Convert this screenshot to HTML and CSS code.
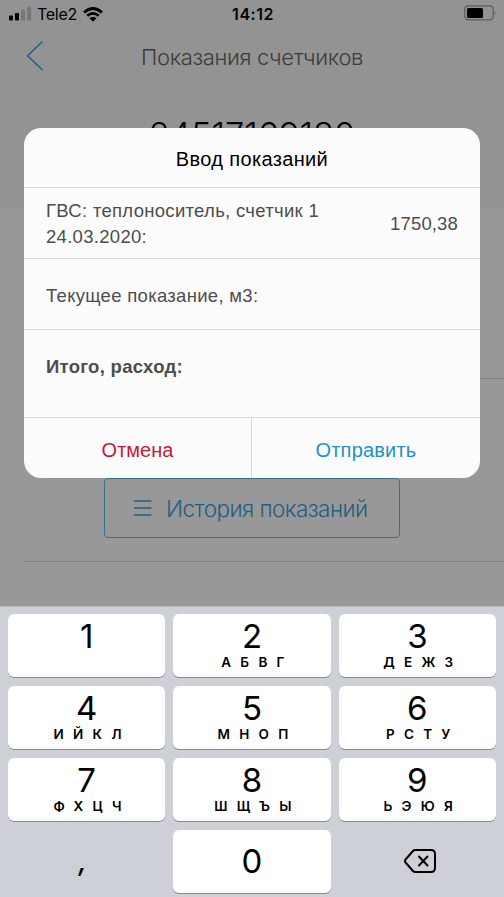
FILE: index.html
```html
<!DOCTYPE html>
<html lang="ru">
<head>
<meta charset="utf-8">
<title>Показания счетчиков</title>
<link rel="stylesheet" href="styles.css">
</head>
<body>
<div class="screen">
  <main class="page">
    <header class="top">
      <div class="status">
        <div class="carrier">
          <svg class="signal" width="23" height="15" viewBox="0 0 23 15"><rect x="0" y="9.500" width="4" height="5" rx="1"/><rect x="6" y="7" width="4" height="7.500" rx="1"/><g fill="#777"><rect x="12" y="3.500" width="4" height="11" rx="1"/><rect x="18.200" y=".5" width="4" height="14" rx="1"/></g></svg>
          <span class="operator">Tele2</span>
          <svg class="wifi" width="20" height="15" viewBox="0 0 20 15" fill="none" stroke="#000" stroke-width="2.700"><path d="M1 5.400Q10-2.400 19 5.400M4.200 8.700Q10 3.900 15.800 8.700"/><path fill="#000" stroke="none" d="M6.500 11.300Q10 8.700 13.500 11.300L10 14.800z"/></svg>
        </div>
        <span class="clock">14:12</span>
        <svg class="battery" width="33" height="16" viewBox="0 0 33 16"><rect x=".8" y=".8" width="28.400" height="14" rx="3.500" fill="none" stroke="#5d5d5d" stroke-width="1.300"/><rect x="3" y="3" width="16" height="10" rx="1.500"/><path d="M30.700 5.200q1.800 2.600 0 5.200z" fill="#5d5d5d"/></svg>
      </div>
      <nav class="nav">
        <svg class="back" width="18" height="32" viewBox="0 0 18 32"><path d="M16.500 1.500L1.500 15.700L16.500 30" fill="none" stroke="#235f80" stroke-width="1.400"/></svg>
        <h1 class="title">Показания счетчиков</h1>
      </nav>
      <div class="account">24517169180</div>
    </header>
    <section class="content">
      <div class="meter"></div>
      <div class="history">
        <svg width="18" height="16" viewBox="0 0 18 16"><path d="M0 1h17.500M0 8h17.500M0 15h17.500" stroke="#235f80" stroke-width="1.400"/></svg>
        <span class="history-text">История показаний</span>
      </div>
      <div class="rule"></div>
    </section>
  </main>

  <section class="dialog">
    <h2 class="dialog-title">Ввод показаний</h2>
    <div class="row previous"><p class="label"><span class="meter-name">ГВС: теплоноситель, счетчик 1</span><br><span class="date">24.03.2020:</span></p><span class="value">1750,38</span></div>
    <div class="row current"><span class="current-text">Текущее показание, м3:</span></div>
    <div class="row total"><b class="total-text">Итого, расход:</b></div>
    <div class="actions"><div class="cancel"><span class="cancel-text">Отмена</span></div><div class="send"><span class="send-text">Отправить</span></div></div>
  </section>

  <section class="keyboard">
    <div class="key"><span class="digit">1</span></div>
    <div class="key"><span class="digit">2</span><span class="letters">АБВГ</span></div>
    <div class="key"><span class="digit">3</span><span class="letters">ДЕЖЗ</span></div>
    <div class="key"><span class="digit">4</span><span class="letters">ИЙКЛ</span></div>
    <div class="key"><span class="digit">5</span><span class="letters">МНОП</span></div>
    <div class="key"><span class="digit">6</span><span class="letters">РСТУ</span></div>
    <div class="key"><span class="digit">7</span><span class="letters">ФХЦЧ</span></div>
    <div class="key"><span class="digit">8</span><span class="letters">ШЩЪЫ</span></div>
    <div class="key"><span class="digit">9</span><span class="letters">ЬЭЮЯ</span></div>
    <div class="key plain"><span class="comma">,</span></div>
    <div class="key zero"><span class="digit">0</span></div>
    <div class="key plain"><svg width="32" height="24" viewBox="0 0 32 24" fill="none" stroke="#000" stroke-width="2" stroke-linejoin="round" stroke-linecap="round"><path d="M11 1H27Q31 1 31 5V19Q31 23 27 23H11Q10 23 9 22L1.500 13.500Q.5 12 1.500 10.500L9 2Q10 1 11 1Z"/><path d="M15 7.500L23.500 16.500M23.500 7.500L15 16.500"/></svg></div>
  </section>
</div>
</body>
</html>
```
FILE: styles.css
```css
* { box-sizing: border-box; }
body { margin: 0; font-family: "Liberation Sans", sans-serif; }
h1, h2, p { margin: 0; font-weight: 400; }
svg { display: block; flex: none; }
span, b { white-space: nowrap; }
.screen { position: relative; width: 504px; height: 897px; overflow: hidden; background: #989898; display: flex; flex-direction: column; }
.page { height: 606px; flex: none; }
.top { height: 208px; background: #939393; overflow: hidden; }
.status { height: 28px; padding: 0 7px 0 9px; display: grid; grid-template-columns: 1fr auto 1fr; align-items: center; }
.carrier { display: flex; align-items: center; }
.signal { margin-top: -1px; }
.operator { margin-left: 5px; width: 41px; font: 400 16px/28px Inter, sans-serif; letter-spacing: -.3px; }
.wifi { margin-left: 5px; }
.clock { font: 600 16px/28px Inter, sans-serif; letter-spacing: .5px; }
.battery { justify-self: end; margin-top: -2px; }
.nav { height: 56px; padding-left: 26px; display: flex; align-items: center; }
.title { margin-left: 97px; white-space: nowrap; font: 300 22px/56px Inter, sans-serif; color: #3c3c3c; letter-spacing: -.35px; padding-top: 1px; }
.back { margin-top: -1px; }
.account { margin-top: 33px; font: 300 34.500px/36px Inter, sans-serif; text-align: center; }
.content { padding-left: 24px; }
.meter { height: 171px; border-bottom: 1px solid #808080; }
.history { margin: 99px 0 0 80px; width: 296px; height: 60px; border: 1px solid #34708f; border-radius: 4px; padding-left: 29px; display: flex; align-items: center; color: #235f80; }
.history-text { margin-left: 14px; padding-top: 2px; font: 300 22.500px/58px Inter, sans-serif; letter-spacing: -.55px; }
.rule { margin-top: 23px; height: 1px; background: #808080; }
.dialog { position: absolute; left: 24px; top: 128px; width: 456px; height: 350px; border-radius: 17px; background: #fcfcfc; overflow: hidden; }
.dialog-title { height: 60px; border-bottom: 1px solid #dcdcdc; text-align: center; font-size: 20px; line-height: 62px; letter-spacing: .35px; }
.row { padding: 0 22px; display: flex; align-items: center; justify-content: space-between; color: #4d4d4d; font-size: 18.500px; letter-spacing: .3px; border-bottom: 1px solid #d8d8d8; }
.previous { height: 71px; }
.label { line-height: 26px; padding-top: 2px; }
.value { letter-spacing: .15px; padding-top: 2px; }
.current { height: 71px; padding-top: 3px; }
.total { height: 88px; padding-bottom: 14px; }
.actions { height: 60px; display: grid; grid-template-columns: 228px 1fr; font-size: 20px; line-height: 65px; text-align: center; }
.cancel { color: #c61935; border-right: 1px solid #d8d8d8; }
.send { color: #2291c9; letter-spacing: .2px; }
.keyboard { height: 291px; flex: none; background: #ced0d7; border-top: 1px solid #bbbcc0; padding: 7px 8px 4px; display: grid; grid-template-columns: repeat(3, 1fr); grid-template-rows: repeat(4, 1fr); gap: 9.500px 8px; }
.key { min-height: 0; background: #fff; border-radius: 6px; box-shadow: 0 1px 0 #8b8c90; display: flex; flex-direction: column; align-items: center; }
.digit { font: 400 33px/44px Inter, sans-serif; }
.letters { margin: -4px -7px 0 0; font: 600 13.500px/16px Inter, sans-serif; letter-spacing: 9.300px; padding-left: 4px; }
.plain { background: none; box-shadow: none; justify-content: center; }
.plain svg { margin: -2px 0 0 6px; }
.zero { justify-content: center; }
.zero .digit { margin-top: -1px; }
.comma { font: italic 500 28px/32px Inter, sans-serif; margin: -1px 8px 0 0; }
```
